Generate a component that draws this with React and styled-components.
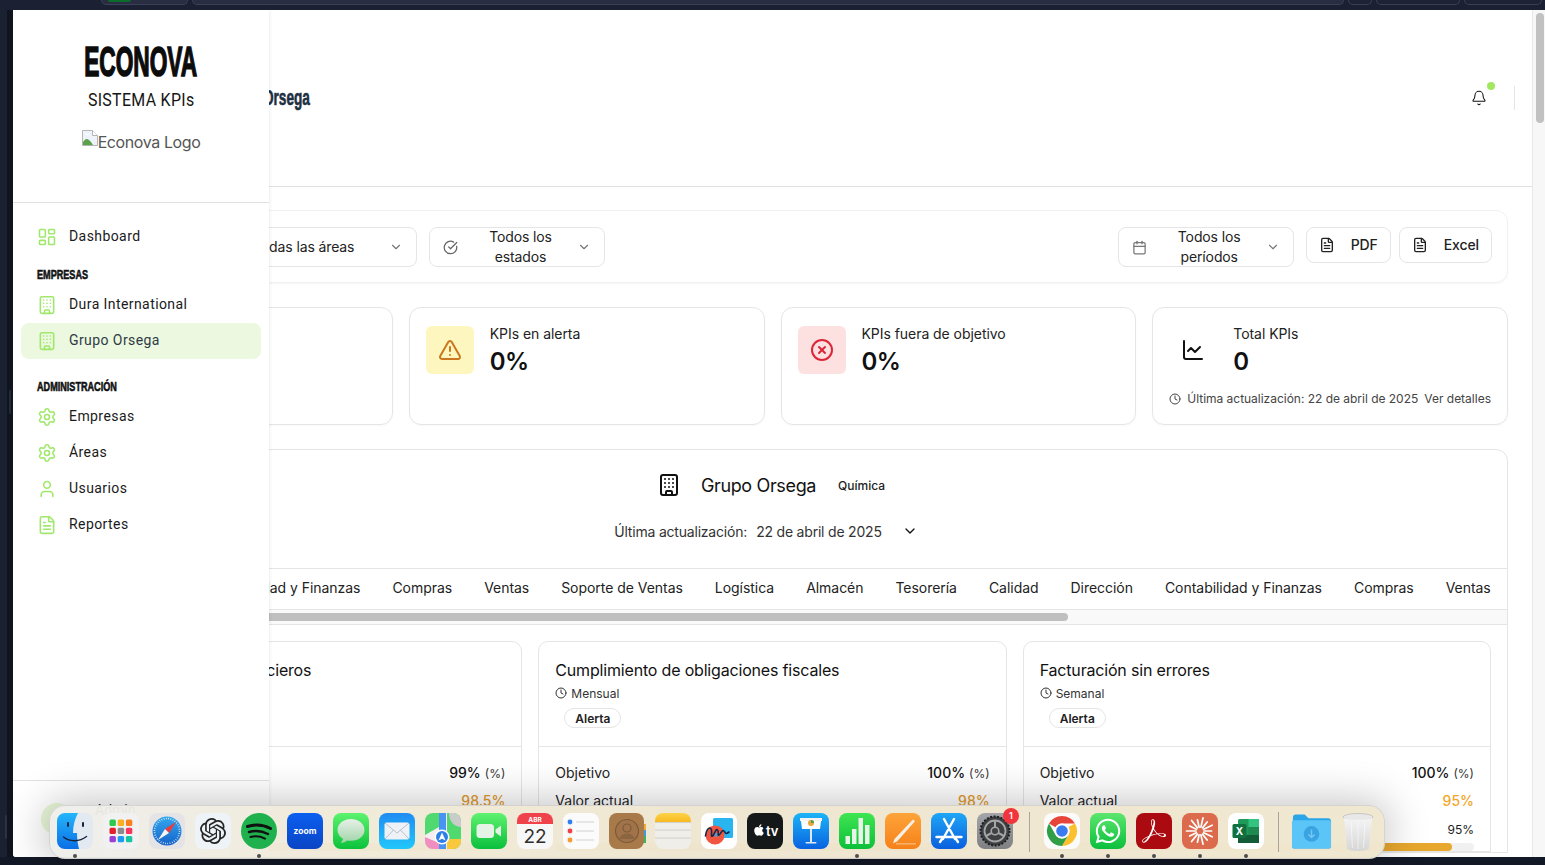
import React from "react";
import styled, { createGlobalStyle } from "styled-components";
import {
  Bell, Building, Calendar, ChartLine, ChevronDown, CircleCheckBig, CircleX, Clock, FileText,
  LayoutDashboard, Layers, Search, Settings, TriangleAlert, User, CircleCheck,
} from "lucide-react";
import { SiOpenai, SiAdobeacrobatreader } from "react-icons/si";
import { FaWhatsapp, FaApple } from "react-icons/fa";

const Global = createGlobalStyle`
  html, body { margin: 0; padding: 0; height: 100%; overflow: hidden; background: #131826; }
  * { box-sizing: border-box; }
  body { font-family: Inter, "Liberation Sans", sans-serif; color: #111; }
`;

const Desktop = styled.div`position: relative; width: 1545px; height: 865px; background: #131826; overflow: hidden;`;
const TopBar = styled.div`display: flex; gap: 4px; height: 10px; padding-left: 101px; background: #1b2132;`;
const TopTab = styled.div`
  position: relative; width: ${p => p.$w}px; height: 4.5px; background: ${p => p.$light ? "#282d42" : "#1d2335"};
  border: 1px solid #3a4055; border-top: none; border-radius: 0 0 5px 5px; flex: none;
`;
const TopTabGreen = styled.span`position: absolute; left: 6px; top: 0; width: 23px; height: 2px; background: #0b6b2b; border-radius: 0 0 3px 3px;`;
const LeftEdge = styled.div`
  position: absolute; left: 0; top: 10px; width: 13px; height: 847px;
  background: linear-gradient(90deg, #1a2231 0 7px, #10141e 7px 13px);
`;
const EdgeMark = styled.span`position: absolute; left: ${p => p.$x}px; top: ${p => p.$y}px; width: 2px; height: 24px; background: ${p => p.$c}; border-radius: 1px;`;

const Window = styled.div`
  position: absolute; left: 13px; top: 10px; width: 1532px; height: 847px; display: flex; background: #fff;
  overflow: hidden; border-bottom-left-radius: 3px;
`;
const Main = styled.main`flex: 1; min-width: 0; display: flex; flex-direction: column; overflow: hidden;`;
const ScrollTrack = styled.div`width: 13px; flex: none; background: #f7f7f7; border-left: 1px solid #e8e8e8; padding: 3px 1px 0 3px;`;
const ScrollThumb = styled.div`height: 110px; background: #c1c1c1; border-radius: 5px;`;

const Header = styled.header`
  flex: none; height: 177px; display: flex; align-items: center; justify-content: space-between;
  border-bottom: 1px solid #e2e2e2; padding: 0 17px 0 149px;
`;
const HeaderTitle = styled.h1`
  margin: 0; font-family: "Liberation Sans", sans-serif; font-size: 22px; font-weight: 700; white-space: nowrap;
  color: #1e2f42; transform: scaleX(.62); transform-origin: right center; -webkit-text-stroke: .6px #1e2f42;
`;
const HeaderRight = styled.div`display: flex; align-items: center;`;
const BellWrap = styled.div`position: relative; width: 16px; height: 16px; display: flex; margin-right: 27px;`;
const BellDot = styled.span`position: absolute; right: -8px; top: -8px; width: 8px; height: 8px; border-radius: 50%; background: #a2e85f;`;
const HeaderDivider = styled.div`width: 1px; height: 24px; background: #e5e5e5;`;

const Content = styled.div`flex: 1; min-height: 0; padding: 23px 24px 0; display: flex; flex-direction: column; gap: 24px;`;

const FilterCard = styled.section`
  flex: none; height: 73px; display: flex; justify-content: space-between; align-items: flex-start;
  border: 1px solid #f0f0f0; border-radius: 12px; padding: 16px 15px 16px 16px;
  box-shadow: 0 1px 2px rgba(0,0,0,.04);
`;
const FilterGroup = styled.div`display: flex; align-items: flex-start; gap: ${p => p.$gap}px;`;
const SearchBox = styled.div`
  width: 139px; height: 40px; display: flex; align-items: center; gap: 8px; padding: 0 12px; border: 1px solid #e5e5e5;
  border-radius: 8px; font-size: 14px; color: #777;
`;
const Select = styled.div`
  width: ${p => p.$w || 176}px; height: 40px; display: flex; align-items: center; padding: 0 13px; gap: 10px; border: 1px solid #e5e5e5;
  border-radius: 8px; font-size: 14px; line-height: 20px; color: #222; background: #fff; letter-spacing: -.12px;
`;
const SelectText = styled.span`flex: 1; text-align: ${p => p.$left ? "left" : "center"}; min-width: 0; padding-left: ${p => p.$left ? 10 : 6}px;`;
const ActionButton = styled.button`
  height: 36px; display: flex; align-items: center; gap: 16px; padding: 0 12px 1px; border: 1px solid #e5e5e5; border-radius: 8px;
  background: #fff; font: 500 14px Inter, sans-serif; letter-spacing: -.1px; color: #222; margin-left: ${p => p.$ml || 0}px;
`;

const StatGrid = styled.section`flex: none; height: 118px; display: grid; grid-template-columns: repeat(4, 1fr); gap: 16px;`;
const StatCard = styled.article`
  border: 1px solid #e5e5e5; border-radius: 12px; padding: 18px 16px 0; box-shadow: 0 1px 2px rgba(0,0,0,.03);
`;
const StatTop = styled.div`display: flex; gap: 16px;`;
const StatIcon = styled.div`
  width: 48px; height: 48px; flex: none; display: flex; align-items: center; justify-content: center; border-radius: 6px; background: ${p => p.$bg};
  color: ${p => p.$fg};
`;
const StatLabel = styled.div`font-size: 14px; line-height: 18px; color: #222; margin-top: -1px; letter-spacing: -.05px;`;
const StatValue = styled.div`font-size: 24px; line-height: 32px; font-weight: 600; color: #111; margin-top: 3px; letter-spacing: -.7px;`;
const StatFooter = styled.div`
  display: flex; align-items: center; font-size: 12px; color: #444; margin-top: 13px; white-space: nowrap;
`;
const FooterDate = styled.span`margin-left: 6px; flex: 1; letter-spacing: -.02px;`;

const Panel = styled.section`flex: none; border: 1px solid #e5e5e5; border-radius: 12px 12px 0 0;`;
const PanelHead = styled.div`height: 118px; padding-top: 19px; display: flex; flex-direction: column; align-items: center; gap: 20px;`;
const TitleRow = styled.div`height: 32px; display: flex; align-items: center;`;
const PanelTitle = styled.h2`margin: 0 22px 0 20px; font-size: 18px; font-weight: 400; color: #111; letter-spacing: -.35px;`;
const Industry = styled.span`font-size: 12px; font-weight: 500; color: #222; margin-right: 3px;`;
const DateRow = styled.div`height: 20px; display: flex; align-items: center; font-size: 14px; color: #333; gap: 9px; letter-spacing: -.2px;`;
const ChevronSlot = styled.span`display: flex; margin: 0 13px 0 11px; color: #111;`;

const TabBar = styled.nav`
  height: 42px; display: flex; gap: 32px; padding: 0 0 4px 71px; overflow: hidden; border-top: 1px solid #e5e5e5; border-bottom: 1px solid #e5e5e5;
  align-items: center; font-size: 14px; color: #222; white-space: nowrap; letter-spacing: -.04px;
`;
const TabItem = styled.span`flex: none;`;
const TabScroll = styled.div`height: 15px; background: #f9f9f9; padding: 3px 0 0; border-bottom: 1px solid #e5e5e5;`;
const TabThumb = styled.div`width: 1030px; height: 8px; background: #bfbfbf; border-radius: 0 4px 4px 0;`;

const CardGrid = styled.div`display: grid; grid-template-columns: repeat(3, 1fr); gap: 16px; padding: 16px 16px 0;`;
const KpiCard = styled.article`border: 1px solid #e5e5e5; border-radius: 10px 10px 0 0;`;
const KpiHead = styled.div`height: 105px; padding: 16px 16px 0; border-bottom: 1px solid #e5e5e5;`;
const KpiTitle = styled.h3`margin: 0; font-size: 16px; line-height: 24px; font-weight: 400; color: #111; white-space: nowrap; letter-spacing: -.18px;`;
const KpiMeta = styled.div`display: flex; align-items: center; gap: 4px; height: 16px; margin-top: 3px; font-size: 12px; color: #333;`;
const Badge = styled.span`
  display: inline-flex; align-items: center; height: 20px; margin: 7px 0 0 9px; padding: 0 10px; border: 1px solid #e5e5e5;
  border-radius: 10px; font-size: 12px; font-weight: 600; color: #222;
`;
const KpiBody = styled.div`padding: 16px 16px 0;`;
const ValueRow = styled.div`display: flex; justify-content: space-between; height: 20px; line-height: 20px; font-size: 14px; color: #222; margin-bottom: 8px;`;
const ValueStrong = styled.span`font-weight: 500; color: ${p => p.$c || "#111"};`;
const Unit = styled.span`font-size: 12px; font-weight: 400; color: #333; margin-left: 4px;`;
const BarLabel = styled.div`text-align: right; font-size: 12px; line-height: 16px; margin-top: 11px; color: #222;`;
const BarTrack = styled.div`height: 8px; margin-top: 5px; background: #f1f1f1; border-radius: 4px; overflow: hidden;`;
const BarFill = styled.div`height: 100%; background: #e8a82e; border-radius: 4px;`;

const Sidebar = styled.aside`
  position: absolute; left: 0; top: 0; bottom: 0; width: 256px; background: #fff; display: flex; flex-direction: column;
  box-shadow: 1px 0 3px rgba(0,0,0,.07); z-index: 2;
`;
const Brand = styled.div`flex: none; height: 193px; border-bottom: 1px solid #e2e2e2; display: flex; flex-direction: column; align-items: center; padding-top: 30px;`;
const BrandName = styled.div`
  font-family: "Liberation Sans", sans-serif; font-weight: 700; font-size: 42px; line-height: 44px; color: #0c0c0c;
  -webkit-text-stroke: 1.6px #0c0c0c; transform: scaleX(.54); white-space: nowrap;
`;
const BrandSub = styled.div`font-family: Roboto, sans-serif; font-size: 18px; line-height: 24px; margin-top: 4px; color: #161616; letter-spacing: .35px; transform: scaleX(.885); white-space: nowrap;`;
const BrandLogo = styled.div`display: flex; align-items: flex-start; margin-top: 18px; font-size: 16px; line-height: 24px; color: #555; letter-spacing: -.4px;`;
const Nav = styled.nav`flex: 1; padding: 16px 8px 0;`;
const NavRow = styled.div`
  height: 36px; display: flex; align-items: center; gap: 12px; padding: 0 16px; border-radius: 8px; font-family: Roboto, sans-serif;
  font-size: 14px; letter-spacing: .42px; color: ${p => p.$active ? "#2e3a46" : "#1a1a1a"}; background: ${p => p.$active ? "#ecf8df" : "transparent"};
  svg { color: #a0e86b; flex: none; }
`;
const NavLabel = styled.span`margin-top: -2px;`;
const NavSection = styled.div`
  font-family: "Liberation Sans", sans-serif; font-weight: 700; font-size: 13px; line-height: 14px; color: #111;
  margin: ${p => p.$top}px 0 5px 16px; -webkit-text-stroke: .6px #111; transform: scaleX(.7); transform-origin: left center; white-space: nowrap;
`;
const SideFooter = styled.div`flex: none; height: 77px; border-top: 1px solid #e2e2e2; display: flex; align-items: flex-start; padding: 22px 0 0 28px; gap: 22px;`;
const Avatar = styled.div`width: 32px; height: 32px; border-radius: 50%; background: #e9f8d8;`;
const FooterName = styled.div`font-family: Roboto, sans-serif; font-size: 14px; line-height: 14px; color: #222;`;

const Dock = styled.div`
  position: absolute; left: 49px; top: 805px; width: 1336px; height: 54px; display: flex; align-items: flex-start; gap: 10px; padding: 7px 0 0 7px;
  border-radius: 16px; border: 1px solid rgba(205,205,205,.8);
  background: linear-gradient(90deg, rgba(238,238,236,.96) 0, rgba(240,234,216,.97) 22%, rgba(238,230,208,.98) 50%, rgba(240,231,208,.98) 100%);
  box-shadow: 0 0 42px 4px rgba(0,0,0,.24);
  z-index: 5;
`;
const DockSlot = styled.div`position: relative; width: 36px; height: 36px; flex: none; svg { display: block; }`;
const DockOffset = styled.div`margin: -1px 0 0 5px;`;
const DockDot = styled.span`position: absolute; left: 16px; top: 41px; width: 4px; height: 4px; border-radius: 50%; background: #4d4d4d;`;
const DockBadge = styled.span`
  position: absolute; right: -6px; top: -5px; width: 16px; height: 16px; border-radius: 50%; background: #f0363c; color: #fff;
  font: 600 9px/16px Inter, sans-serif; text-align: center;
`;
const DockSep = styled.div`width: 1px; height: 40px; background: #a9a59b; flex: none; margin: -1px ${p => p.$m}px 0 ${p => p.$l}px;`;

const Tile = ({ fill, children, r = 8 }) => (
  <svg width="36" height="36" viewBox="0 0 36 36">
    <rect x="0" y="0" width="36" height="36" rx={r} fill={fill} />
    {children}
  </svg>
);
const Grad = ({ id, a, b, h }) => (
  <defs>
    <linearGradient id={id} x1="0" y1="0" x2={h ? "1" : "0"} y2={h ? "0" : "1"}>
      <stop offset="0" stopColor={a} /><stop offset="1" stopColor={b} />
    </linearGradient>
  </defs>
);

const icons = {
  finder: (
    <svg width="36" height="36" viewBox="0 0 36 36">
      <Grad id="fi" a="#23b6fb" b="#0b6fe6" />
      <rect width="36" height="36" rx="8" fill="#e3e9f0" />
      <path d="M8 0h13c-3 6-5 12-5 20h4c0 5 .6 10 2 16H8a8 8 0 0 1-8-8V8a8 8 0 0 1 8-8z" fill="url(#fi)" />
      <rect x="10" y="9" width="2" height="5" rx="1" fill="#16233a" /><rect x="25" y="9" width="2" height="5" rx="1" fill="#16233a" />
      <path d="M6.5 24c6 5 16 5 23-.5" stroke="#16233a" strokeWidth="1.4" fill="none" strokeLinecap="round" />
    </svg>
  ),
  launchpad: (
    <Tile fill="#f1f1f1">
      {["#2dc84d", "#fbb01f", "#f8811d", "#e3202b", "#8b8b8b", "#f8345f", "#9a3fd6", "#1c9bf2", "#14c6a2"].map((c, i) => (
        <rect key={c} x={6.5 + (i % 3) * 8.2} y={6.5 + Math.floor(i / 3) * 8.2} width="6.4" height="6.4" rx="1.5" fill={c} />
      ))}
    </Tile>
  ),
  safari: (
    <Tile fill="#e4e4e6">
      <Grad id="sa" a="#35a8ef" b="#1462c8" />
      <circle cx="18" cy="18" r="14.5" fill="url(#sa)" />
      <circle cx="18" cy="18" r="12.5" fill="none" stroke="#fff" strokeWidth="1.6" strokeDasharray=".7 1.6" />
      <path d="M27 9 16 16l4 4z" fill="#f0393b" /><path d="M9 27l7-11 4 4z" fill="#f4f4f4" />
    </Tile>
  ),
  chatgpt: (
    <Tile fill="#eef3f7"><SiOpenai x="5" y="5" size="26" color="#262626" /></Tile>
  ),
  spotify: (
    <svg width="36" height="36" viewBox="0 0 36 36">
      <circle cx="18" cy="18" r="18" fill="#1fb14d" />
      <g fill="none" stroke="#111" strokeLinecap="round">
        <path d="M6.5 13.5c8-2.4 16-1.6 23 2" strokeWidth="3" />
        <path d="M8 19c6.500-1.800 13-1.200 19 2" strokeWidth="2.500" />
        <path d="M9.500 24c5-1.300 10-.8 14.500 1.600" strokeWidth="2" />
      </g>
    </svg>
  ),
  zoom: (
    <svg width="36" height="36" viewBox="0 0 36 36">
      <Grad id="zo" a="#0b5ff0" b="#0a45c4" />
      <rect width="36" height="36" rx="8" fill="url(#zo)" />
      <text x="18" y="20.500" textAnchor="middle" fontFamily="Inter" fontWeight="700" fontSize="8.500" fill="#fff">zoom</text>
    </svg>
  ),
  messages: (
    <svg width="36" height="36" viewBox="0 0 36 36">
      <Grad id="me" a="#5df36f" b="#0cc13b" /><Grad id="mb" a="#e8f0e8" b="#9fd5a8" />
      <rect width="36" height="36" rx="8" fill="url(#me)" />
      <path d="M18 6c-8 0-13.500 5-13.500 11 0 4 2.400 7 5.500 8.800-.3 1.600-1.300 3-2.400 4 2.500 0 4.800-1 6.500-2.400 1.300.3 2.600.4 3.900.4 8 0 13.500-5 13.500-10.800S26 6 18 6z" fill="url(#mb)" />
    </svg>
  ),
  mail: (
    <svg width="36" height="36" viewBox="0 0 36 36">
      <Grad id="ma" a="#1e8cf2" b="#21c7fb" />
      <rect width="36" height="36" rx="8" fill="url(#ma)" />
      <rect x="5.500" y="9.500" width="25" height="17" rx="2" fill="#eef2f6" />
      <path d="M6 10l12 10 12-10M6 26l8.500-9M30 26l-8.500-9" fill="none" stroke="#a9b4c0" strokeWidth=".8" />
    </svg>
  ),
  maps: (
    <svg width="36" height="36" viewBox="0 0 36 36">
      <rect width="36" height="36" rx="8" fill="#4fd96f" />
      <path d="M0 22 14 14V0h8v36H8a8 8 0 0 1-8-8z" fill="#f3eef0" />
      <path d="M0 24 14 30v6H8a8 8 0 0 1-8-8z" fill="#f08ec0" />
      <path d="M22 26h14v2a8 8 0 0 1-8 8h-6z" fill="#f9c83c" />
      <path d="M14 0h7v36h-7z" fill="#3f8df2" opacity=".95" />
      <path d="M24 0h4a8 8 0 0 1 8 8v6c-6 0-12-5-12-14z" fill="#c9ccc9" />
      <circle cx="17" cy="24" r="7.500" fill="#fff" /><circle cx="17" cy="24" r="6" fill="#2d7fe8" />
      <path d="M17 19.500l3.500 8-3.500-1.700-3.500 1.700z" fill="#fff" />
    </svg>
  ),
  facetime: (
    <svg width="36" height="36" viewBox="0 0 36 36">
      <Grad id="fa" a="#5ff26f" b="#0abf3c" />
      <rect width="36" height="36" rx="8" fill="url(#fa)" />
      <rect x="5.500" y="11" width="17.500" height="14" rx="3.500" fill="#e4f3e6" />
      <path d="M24.500 16.500 30 12.500v11l-5.500-4z" fill="#e4f3e6" />
    </svg>
  ),
  calendar: (
    <svg width="36" height="36" viewBox="0 0 36 36">
      <rect width="36" height="36" rx="8" fill="#f7f7f7" />
      <path d="M8 0h20a8 8 0 0 1 8 8v3H0V8a8 8 0 0 1 8-8z" fill="#f0424a" />
      <text x="18" y="8.500" textAnchor="middle" fontFamily="Inter" fontWeight="700" fontSize="6.500" fill="#fff">ABR</text>
      <text x="18" y="29.500" textAnchor="middle" fontFamily="Inter" fontSize="19" fill="#2d2d2d">22</text>
    </svg>
  ),
  reminders: (
    <Tile fill="#fbfbfb">
      {[["#2f7ff0", 9], ["#ee3f45", 18], ["#f69a2c", 27]].map(([c, y]) => (
        <g key={y}>
          <circle cx="7" cy={y} r="3.200" fill="#fff" stroke="#e0e0e0" strokeWidth=".5" /><circle cx="7" cy={y} r="2.400" fill={c} />
          <rect x="13" y={y - .6} width="18" height="1.200" fill="#d8d8d8" />
        </g>
      ))}
    </Tile>
  ),
  contacts: (
    <svg width="37" height="36" viewBox="0 0 37 36">
      <rect x="30" y="11" width="7" height="6" fill="#f0a93a" /><rect x="30" y="17" width="7" height="6" fill="#3f9ae0" /><rect x="30" y="23" width="7" height="7" fill="#3fb35a" />
      <rect width="35" height="36" rx="8" fill="#a87a4a" />
      <circle cx="18" cy="18" r="11.500" fill="#a0734a" stroke="#7f5a38" strokeWidth="1.200" />
      <circle cx="18" cy="15" r="4" fill="#a0734a" stroke="#7f5a38" strokeWidth="1.200" />
      <path d="M10.500 26c1-4 4-5.500 7.500-5.500s6.500 1.500 7.500 5.500" fill="#8b6440" />
    </svg>
  ),
  notes: (
    <svg width="36" height="36" viewBox="0 0 36 36">
      <Grad id="no" a="#fdd34a" b="#f8b91e" />
      <rect width="36" height="36" rx="8" fill="#efeee9" />
      <path d="M8 0h20a8 8 0 0 1 8 8v1H0V8a8 8 0 0 1 8-8z" fill="url(#no)" />
      <path d="M0 9.500h36M0 17h36M0 25h36" stroke="#c9c8c3" strokeWidth=".8" />
    </svg>
  ),
  freeform: (
    <Tile fill="#fff">
      <rect x="12" y="5" width="20" height="20" rx="1.500" fill="#28b5f0" />
      <circle cx="14" cy="22" r="9.500" fill="#f2553f" />
      <path d="M12 20h8c-1 3-3 4-6 4z" fill="#6e8fb0" />
      <path d="M4.500 23c1-8 5-10 6-6 .6 3-1 7 1 6s3-8 5-6-.5 6 1.500 5 3-6 5-4 1 4 5 1" fill="none" stroke="#12294a" strokeWidth="1.600" strokeLinecap="round" />
    </Tile>
  ),
  tv: (
    <Tile fill="#141818">
      <FaApple x="5.500" y="10.500" size="13" color="#fff" />
      <text x="19" y="23" fontFamily="Inter" fontWeight="600" fontSize="13" fill="#fff">tv</text>
    </Tile>
  ),
  keynote: (
    <svg width="36" height="36" viewBox="0 0 36 36">
      <Grad id="ke" a="#1db4f8" b="#0a62e0" />
      <rect width="36" height="36" rx="8" fill="url(#ke)" />
      <rect x="7" y="5" width="22" height="3" fill="#f4f4f4" /><path d="M8 8h20l-1 8H9z" fill="#fff" />
      <circle cx="18" cy="10" r="3" fill="#f1a33a" /><path d="M18 10V7a3 3 0 0 1 3 3z" fill="#47a54b" />
      <rect x="17" y="16" width="2" height="13" fill="#dfe8f3" /><rect x="12.500" y="29" width="11" height="1.500" rx=".7" fill="#dfe8f3" />
    </svg>
  ),
  numbers: (
    <svg width="36" height="36" viewBox="0 0 36 36">
      <Grad id="nu" a="#3fe552" b="#0cbf3a" />
      <rect width="36" height="36" rx="8" fill="url(#nu)" />
      <rect x="6.500" y="23" width="4.500" height="8" fill="#e8f4e8" /><rect x="13" y="16" width="4.500" height="15" fill="#e8f4e8" />
      <rect x="19.500" y="5" width="4.500" height="26" fill="#e8f4e8" /><rect x="26" y="12" width="4.500" height="19" fill="#e8f4e8" />
    </svg>
  ),
  pages: (
    <svg width="36" height="36" viewBox="0 0 36 36">
      <Grad id="pa" a="#fda43a" b="#f6811a" />
      <rect width="36" height="36" rx="8" fill="url(#pa)" />
      <path d="M28 6.500l2 1.800L12 28.500l-4 1.800 1.500-4.300z" fill="#f6efe6" />
      <rect x="11" y="30.500" width="20" height=".8" fill="#f8d9b0" />
    </svg>
  ),
  appstore: (
    <svg width="36" height="36" viewBox="0 0 36 36">
      <Grad id="ap" a="#1fa6f6" b="#0a5fdd" />
      <rect width="36" height="36" rx="8" fill="url(#ap)" />
      <g stroke="#fff" strokeWidth="2.400" strokeLinecap="round">
        <path d="M13 6l11 20M23 6 12 26M5.500 24h25M9 29l2-3M27 29l-2-3" />
      </g>
    </svg>
  ),
  settings: (
    <svg width="36" height="36" viewBox="0 0 36 36">
      <Grad id="se" a="#a3a5a8" b="#7e8083" />
      <rect width="36" height="36" rx="8" fill="url(#se)" />
      <circle cx="18" cy="18" r="14.500" fill="#3f4042" />
      <circle cx="18" cy="18" r="14.500" fill="none" stroke="#1f1f20" strokeWidth="2" strokeDasharray="2 1.500" />
      <circle cx="18" cy="18" r="10.500" fill="none" stroke="#a5a6a8" strokeWidth="1.800" />
      <circle cx="18" cy="18" r="3.800" fill="none" stroke="#a5a6a8" strokeWidth="1.600" />
      <path d="M18 8v6.500M9 23l5.800-3.200M27 23l-5.800-3.200" stroke="#a5a6a8" strokeWidth="2" />
    </svg>
  ),
  chrome: (
    <Tile fill="#fbfbfb">
      <path d="M18 3a15 15 0 0 1 13 7.500H18a7.500 7.500 0 0 0-6.500 3.800L5 10.500A15 15 0 0 1 18 3z" fill="#e8453a" />
      <path d="M31 10.500A15 15 0 0 1 18 33l6.500-11.200A7.500 7.500 0 0 0 24.500 14z" fill="#fbc02d" />
      <path d="M18 33A15 15 0 0 1 5 10.500l6.500 11.300a7.500 7.500 0 0 0 13 0z" fill="#2f9e47" />
      <circle cx="18" cy="18" r="7.500" fill="#fff" /><circle cx="18" cy="18" r="5.800" fill="#3a7bf0" />
    </Tile>
  ),
  whatsapp: (
    <svg width="36" height="36" viewBox="0 0 36 36">
      <Grad id="wa" a="#5ce66e" b="#0bbf3c" />
      <rect width="36" height="36" rx="8" fill="url(#wa)" />
      <FaWhatsapp x="4" y="4" size="28" color="#fff" />
    </svg>
  ),
  acrobat: <Tile fill="#ab0a10"><SiAdobeacrobatreader x="6" y="6" size="24" color="#fff" /></Tile>,
  claude: (
    <Tile fill="#dc6b4d">
      <g stroke="#fff" strokeWidth="1.700" strokeLinecap="round">
        {Array.from({ length: 14 }, (_, i) => {
          const a = (i / 14) * Math.PI * 2;
          const L = i % 2 ? 13.5 : 11.5;
          return <line key={i} x1={18 + 4 * Math.cos(a)} y1={18 + 4 * Math.sin(a)} x2={18 + L * Math.cos(a)} y2={18 + L * Math.sin(a)} />;
        })}
      </g>
    </Tile>
  ),
  excel: (
    <Tile fill="#fff">
      <rect x="10" y="6" width="21" height="24" rx="1.500" fill="#1f9a5a" />
      <rect x="20.500" y="6" width="10.500" height="8" fill="#33c481" /><rect x="20.500" y="14" width="10.500" height="8" fill="#1f8a4f" />
      <rect x="10" y="22" width="21" height="8" fill="#125c38" />
      <rect x="4.500" y="11" width="14" height="14" rx="1.500" fill="#107040" />
      <text x="11.500" y="22" textAnchor="middle" fontFamily="Inter" fontWeight="700" fontSize="10" fill="#fff">X</text>
    </Tile>
  ),
  folder: (
    <svg width="41" height="36" viewBox="0 0 42 36">
      <path d="M2 4a3 3 0 0 1 3-3h9l4 4h20a3 3 0 0 1 3 3v26a2 2 0 0 1-2 2H3a2 2 0 0 1-2-2z" fill="#2aa5e8" />
      <rect x="1" y="7" width="40" height="29" rx="2" fill="#5cc5f7" />
      <circle cx="21" cy="21" r="8" fill="#3aa3e2" />
      <path d="M21 16.500v8M17.800 21.500 21 24.700l3.200-3.200" stroke="#72c8f5" strokeWidth="1.500" fill="none" />
    </svg>
  ),
  trash: (
    <svg width="32" height="40" viewBox="0 0 32 40">
      <Grad id="tr" a="#f4f4f4" b="#d6d6d6" />
      <ellipse cx="16" cy="5" rx="15" ry="3.500" fill="#e8e8e8" stroke="#bdbdbd" strokeWidth=".8" />
      <path d="M2 6l3 30c.2 2 5 3 11 3s10.800-1 11-3l3-30c-4 2-24 2-28 0z" fill="url(#tr)" />
      <path d="M9 10l1.500 26M16 10v27M23 10l-1.500 26" stroke="#fff" strokeWidth=".8" opacity=".7" />
    </svg>
  ),
};

const dockLeft = [
  ["finder", 1], ["launchpad"], ["safari"], ["chatgpt"], ["spotify", 1], ["zoom"], ["messages"], ["mail"], ["maps"], ["facetime"],
  ["calendar"], ["reminders"], ["contacts"], ["notes"], ["freeform"], ["tv"], ["keynote"], ["numbers", 1], ["pages"], ["appstore"], ["settings", 0, "1"],
];
const dockMid = [["chrome", 1], ["whatsapp", 1], ["acrobat", 1], ["claude", 1], ["excel", 1]];

const DockItem = ({ name, dot, badge }) => (
  <DockSlot>
    {icons[name]}
    {dot ? <DockDot /> : null}
    {badge ? <DockBadge>{badge}</DockBadge> : null}
  </DockSlot>
);

const tabs = ["Dirección", "Contabilidad y Finanzas", "Compras", "Ventas", "Soporte de Ventas", "Logística", "Almacén", "Tesorería", "Calidad", "Dirección", "Contabilidad y Finanzas", "Compras", "Ventas"];

const kpis = [
  { title: "Precisión de estados financieros", period: "Mensual", target: "99%", value: "98.5%", color: "#e39a2d", pct: 95 },
  { title: "Cumplimiento de obligaciones fiscales", period: "Mensual", target: "100%", value: "98%", color: "#e39a2d", pct: 95 },
  { title: "Facturación sin errores", period: "Semanal", target: "100%", value: "95%", color: "#f2a62a", pct: 95 },
];

const stats = [
  { label: "KPIs en objetivo", value: "0%", bg: "#e7f8d6", fg: "#6fbf3a", icon: <CircleCheck size={24} /> },
  { label: "KPIs en alerta", value: "0%", bg: "#fef6bf", fg: "#c9781f", icon: <TriangleAlert size={24} /> },
  { label: "KPIs fuera de objetivo", value: "0%", bg: "#fde0e0", fg: "#dc2638", icon: <CircleX size={24} /> },
  { label: "Total KPIs", value: "0", bg: "transparent", fg: "#111", icon: <ChartLine size={24} />, footer: true },
];

const BrokenImage = () => (
  <svg width="16" height="16" viewBox="0 0 16 16" style={{ flex: "none" }}>
    <path d="M.5.500h10l5 5v10H.5z" fill="#eef3fb" stroke="#b5b5b5" />
    <path d="M10.500.500v5h5" fill="#fff" stroke="#b5b5b5" />
    <path d="M1 15v-3c2-3 4-4 6-2l2 2 2 3z" fill="#5aa24a" />
    <path d="M3 5c1-1.500 3-1.500 4 0z" fill="#fff" />
  </svg>
);

const navIcon = { size: 20, strokeWidth: 1.9 };

export default function App() {
  return (
    <Desktop>
      <Global />
      <TopBar>
        <TopTab $w={87} $light><TopTabGreen /></TopTab>
        <TopTab $w={1152} $light />
        <TopTab $w={24} />
        <TopTab $w={84} />
        <TopTab $w={78} />
      </TopBar>
      <LeftEdge>
        <EdgeMark $x={9} $y={380} $c="#232a38" />
        <EdgeMark $x={5} $y={805} $c="#2b3240" />
      </LeftEdge>
      <Window>
        <Main>
          <Header>
            <HeaderTitle>Grupo Orsega</HeaderTitle>
            <HeaderRight>
              <BellWrap><Bell size={16} strokeWidth={1.6} color="#111" /><BellDot /></BellWrap>
              <HeaderDivider />
            </HeaderRight>
          </Header>
          <Content>
            <FilterCard>
              <FilterGroup $gap={12}>
                <SearchBox><Search size={14} />Buscar KPI</SearchBox>
                <Select $w={212}>
                  <Layers size={14} color="#777" />
                  <SelectText $left>Todas las áreas</SelectText><ChevronDown size={14} color="#777" />
                </Select>
                <Select>
                  <CircleCheckBig size={15} color="#666" /><SelectText>Todos los estados</SelectText><ChevronDown size={14} color="#777" />
                </Select>
              </FilterGroup>
              <FilterGroup $gap={8}>
                <Select>
                  <Calendar size={15} color="#777" /><SelectText>Todos los períodos</SelectText><ChevronDown size={14} color="#777" />
                </Select>
                <ActionButton $ml={4}><FileText size={16} />PDF</ActionButton>
                <ActionButton><FileText size={16} />Excel</ActionButton>
              </FilterGroup>
            </FilterCard>
            <StatGrid>
              {stats.map(s => (
                <StatCard key={s.label}>
                  <StatTop>
                    <StatIcon $bg={s.bg} $fg={s.fg}>{s.icon}</StatIcon>
                    <div>
                      <StatLabel>{s.label}</StatLabel>
                      <StatValue>{s.value}</StatValue>
                    </div>
                  </StatTop>
                  {s.footer ? (
                    <StatFooter>
                      <Clock size={12} /><FooterDate>Última actualización: 22 de abril de 2025</FooterDate>Ver detalles
                    </StatFooter>
                  ) : null}
                </StatCard>
              ))}
            </StatGrid>
            <Panel>
              <PanelHead>
                <TitleRow>
                  <Building size={24} color="#111" />
                  <PanelTitle>Grupo Orsega</PanelTitle>
                  <Industry>Química</Industry>
                </TitleRow>
                <DateRow>
                  <span>Última actualización:</span>
                  <span>22 de abril de 2025</span>
                  <ChevronSlot><ChevronDown size={16} /></ChevronSlot>
                </DateRow>
              </PanelHead>
              <TabBar>
                {tabs.map((t, i) => <TabItem key={i}>{t}</TabItem>)}
              </TabBar>
              <TabScroll><TabThumb /></TabScroll>
              <CardGrid>
                {kpis.map(k => (
                  <KpiCard key={k.title}>
                    <KpiHead>
                      <KpiTitle>{k.title}</KpiTitle>
                      <KpiMeta><Clock size={12} />{k.period}</KpiMeta>
                      <Badge>Alerta</Badge>
                    </KpiHead>
                    <KpiBody>
                      <ValueRow><span>Objetivo</span><ValueStrong>{k.target}<Unit>(%)</Unit></ValueStrong></ValueRow>
                      <ValueRow><span>Valor actual</span><ValueStrong $c={k.color}>{k.value}</ValueStrong></ValueRow>
                      <BarLabel>{k.pct}%</BarLabel>
                      <BarTrack><BarFill style={{ width: `${k.pct}%` }} /></BarTrack>
                    </KpiBody>
                  </KpiCard>
                ))}
              </CardGrid>
            </Panel>
          </Content>
        </Main>
        <ScrollTrack><ScrollThumb /></ScrollTrack>
        <Sidebar>
          <Brand>
            <BrandName>ECONOVA</BrandName>
            <BrandSub>SISTEMA KPIs</BrandSub>
            <BrandLogo><BrokenImage />Econova Logo</BrandLogo>
          </Brand>
          <Nav>
            <NavRow><LayoutDashboard {...navIcon} /><NavLabel>Dashboard</NavLabel></NavRow>
            <NavSection $top={13}>EMPRESAS</NavSection>
            <NavRow><Building {...navIcon} /><NavLabel>Dura International</NavLabel></NavRow>
            <NavRow $active><Building {...navIcon} /><NavLabel>Grupo Orsega</NavLabel></NavRow>
            <NavSection $top={21}>ADMINISTRACIÓN</NavSection>
            <NavRow><Settings {...navIcon} /><NavLabel>Empresas</NavLabel></NavRow>
            <NavRow><Settings {...navIcon} /><NavLabel>Áreas</NavLabel></NavRow>
            <NavRow><User {...navIcon} /><NavLabel>Usuarios</NavLabel></NavRow>
            <NavRow><FileText {...navIcon} /><NavLabel>Reportes</NavLabel></NavRow>
          </Nav>
          <SideFooter><Avatar /><FooterName>Admin</FooterName></SideFooter>
        </Sidebar>
      </Window>
      <Dock>
        {dockLeft.map(([n, d, b]) => <DockItem key={n} name={n} dot={d} badge={b} />)}
        <DockSep $l={6} $m={4} />
        {dockMid.map(([n, d]) => <DockItem key={n} name={n} dot={d} />)}
        <DockSep $l={4} $m={2} />
        <DockItem name="folder" />
        <DockSlot><DockOffset>{icons.trash}</DockOffset></DockSlot>
      </Dock>
    </Desktop>
  );
}
